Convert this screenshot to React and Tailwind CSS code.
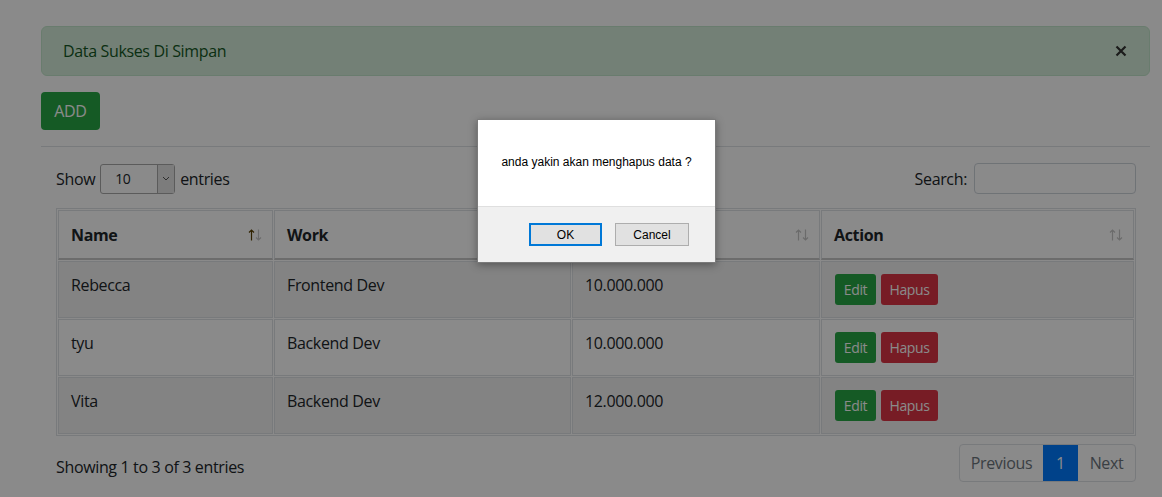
import React from "react";

const rows = [
  { name: "Rebecca", work: "Frontend Dev", salary: "10.000.000", striped: true },
  { name: "tyu", work: "Backend Dev", salary: "10.000.000", striped: false },
  { name: "Vita", work: "Backend Dev", salary: "12.000.000", striped: true },
];

// sort arrows shown in datatables headers
const SortIcon = ({ active }) => (
  <svg className="absolute right-[10px] top-1/2 -translate-y-1/2" width="14" height="13" viewBox="0 0 14 13">
    <path d="M3.5 12V1.5M1 4l2.5-2.5L6 4" fill="none" stroke={active ? "#5a4000" : "#c6c6c6"} strokeWidth="1.2" />
    <path d="M10.5 1v10.5M8 9l2.5 2.5L13 9" fill="none" stroke="#c6c6c6" strokeWidth="1.2" />
  </svg>
);

const App = () => {
  return (
    <div className="relative w-[1162px] h-[497px] overflow-hidden bg-white text-[#212529] font-['Open_Sans',sans-serif] text-[16px] tracking-[-0.35px]">
      <div className="pl-[41px] pr-[12px] pt-[26px]">
        {/* alert */}
        <div className="flex items-center justify-between h-[50px] rounded-[6px] border border-[#c3e6cb] bg-[#d4edda] text-[#155724] pl-[21px] pr-[22px]">
          <span>Data Sukses Di Simpan</span>
          <svg width="12" height="12" viewBox="0 0 12 12">
            <path d="M1.5 1.5l9 9M10.5 1.5l-9 9" stroke="#333" strokeWidth="2.2" />
          </svg>
        </div>

        <button className="mt-[16px] h-[38px] w-[59px] rounded-[4px] bg-[#28a745] text-white">ADD</button>

        {/* card body */}
        <div className="mt-[16px] border-t border-[#dee2e6] pl-[15px] pr-[14px] pt-[16px]">
          <div className="flex items-center justify-between h-[31px]">
            <div className="flex items-center">
              <span>Show</span>
              <div className="ml-[5px] flex h-[30px] w-[75px] items-center justify-between rounded-[3px] border border-[#a9a9a9] bg-white">
                <span className="pl-[14px] text-[14px]">10</span>
                <span className="flex h-full w-[17px] items-center justify-center border-l border-[#a9a9a9] bg-[#e6e6e6]">
                  <svg width="8" height="5" viewBox="0 0 8 5"><path d="M1 1l3 3 3-3" fill="none" stroke="#555" strokeWidth="1" /></svg>
                </span>
              </div>
              <span className="ml-[5px]">entries</span>
            </div>
            <div className="flex items-center gap-[7px]">
              <span>Search:</span>
              <div className="h-[31px] w-[162px] rounded-[4px] border border-[#ced4da] bg-white" />
            </div>
          </div>

          {/* table */}
          <div className="mt-[14px] border border-[#dee2e6]">
            <table className="w-full border-separate border-spacing-[1px]">
              <thead>
                <tr className="h-[50px]">
                  <th className="relative w-[215px] border border-[#dee2e6] border-b-2 border-b-[#c8c8c8] px-[12px] text-left font-bold">
                    Name<SortIcon active />
                  </th>
                  <th className="relative w-[297px] border border-[#dee2e6] border-b-2 border-b-[#c8c8c8] px-[12px] text-left font-bold">
                    Work<SortIcon />
                  </th>
                  <th className="relative w-[248px] border border-[#dee2e6] border-b-2 border-b-[#c8c8c8] px-[12px] text-left font-bold">
                    <SortIcon />
                  </th>
                  <th className="relative border border-[#dee2e6] border-b-2 border-b-[#c8c8c8] px-[12px] text-left font-bold">
                    Action<SortIcon />
                  </th>
                </tr>
              </thead>
              <tbody>
                {rows.map((r) => (
                  <tr key={r.name} className={`h-[57px] ${r.striped ? "bg-[#f2f2f2]" : "bg-white"}`}>
                    <td className="border border-[#dee2e6] px-[12px] pb-[10px]">{r.name}</td>
                    <td className="border border-[#dee2e6] px-[12px] pb-[10px]">{r.work}</td>
                    <td className="border border-[#dee2e6] px-[12px] pb-[10px]">{r.salary}</td>
                    <td className="border border-[#dee2e6] px-[12px]">
                      <div className="flex gap-[5px] pl-[1px]">
                        <button className="h-[31px] w-[41px] rounded-[3px] bg-[#28a745] text-[14px] text-white">Edit</button>
                        <button className="h-[31px] w-[57px] rounded-[3px] bg-[#dc3545] text-[14px] text-white">Hapus</button>
                      </div>
                    </td>
                  </tr>
                ))}
              </tbody>
            </table>
          </div>

          {/* footer */}
          <div className="mt-[8px] flex items-center justify-between">
            <span className="pt-[7px]">Showing 1 to 3 of 3 entries</span>
            <div className="flex h-[38px] rounded-[4px] border border-[#dee2e6]">
              <span className="flex w-[83px] items-center justify-center text-[#6c757d]">Previous</span>
              <span className="flex w-[35px] items-center justify-center bg-[#007bff] text-white">1</span>
              <span className="flex w-[57px] items-center justify-center text-[#6c757d]">Next</span>
            </div>
          </div>
        </div>
      </div>

      {/* dim overlay */}
      <div className="absolute inset-0 bg-black/[0.46]" />

      {/* confirm dialog */}
      <div className="absolute left-[477px] top-[119px] w-[239px] border border-[#7a7a7a] shadow-[0_2px_8px_rgba(0,0,0,0.35)] font-['Liberation_Sans',Arial,sans-serif] text-[12px] text-black tracking-normal">
        <div className="flex h-[86px] items-center justify-center bg-white pb-[2px]">anda yakin akan menghapus data ?</div>
        <div className="flex h-[56px] items-center justify-end gap-[13px] border-t border-[#dfdfdf] bg-[#f0f0f0] pr-[26px]">
          <button className="h-[23px] w-[73px] border-2 border-[#0078d7] bg-[#e1e1e1]">OK</button>
          <button className="h-[23px] w-[74px] border border-[#adadad] bg-[#e1e1e1]">Cancel</button>
        </div>
      </div>
    </div>
  );
};

export default App;
